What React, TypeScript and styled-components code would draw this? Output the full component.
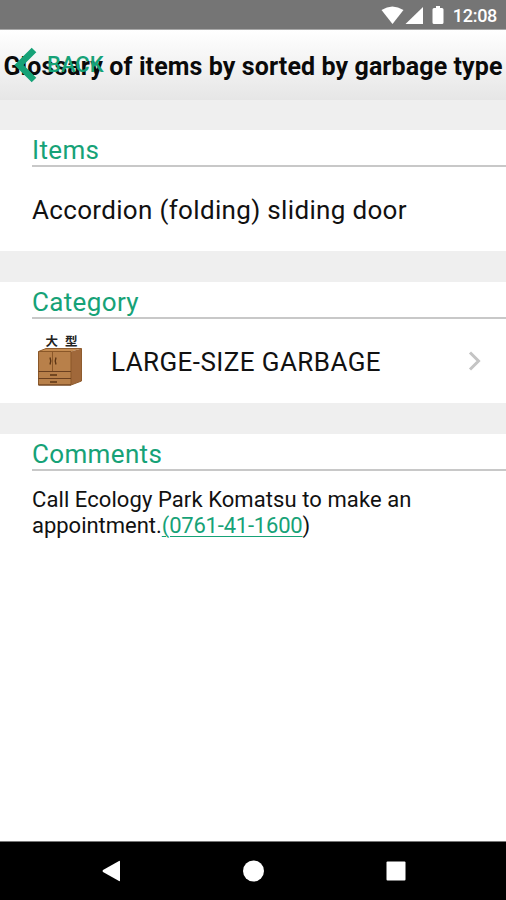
import React from "react";
import styled, { createGlobalStyle } from "styled-components";

const GREEN = "#16a277";

const GlobalStyle = createGlobalStyle`
  * { box-sizing: border-box; }
  body { margin: 0; background: #fff; font-family: Roboto, "Noto Sans", sans-serif; color: #111; }
`;

const Screen = styled.div`
  display: flex;
  flex-direction: column;
  width: 506px;
  height: 900px;
  overflow: hidden;
  background: #efefef;
`;

const StatusBar = styled.div`
  display: flex;
  justify-content: flex-end;
  align-items: center;
  flex: none;
  height: 30px;
  padding-right: 9px;
  background: #757575;
  border-bottom: 1px solid #a8a8a8;
  color: #fff;
`;

const StatusIcons = styled.svg`
  width: 64px;
  height: 22px;
  margin-right: 8px;
  fill: #fff;
`;

const Clock = styled.span`
  font-size: 18px;
  font-weight: 500;
  line-height: 30px;
  letter-spacing: -0.3px;
  padding-top: 3px;
`;

const Header = styled.header`
  position: relative;
  display: flex;
  flex: none;
  justify-content: center;
  height: 70px;
  background: linear-gradient(#ffffff, #e6e6e6);
`;

const Title = styled.h1`
  margin: 0;
  font-size: 25px;
  font-weight: 700;
  line-height: 73px;
  letter-spacing: 0.1px;
  white-space: nowrap;
  color: #0a0a0a;
`;

const BackButton = styled.button`
  position: absolute;
  left: 14px;
  top: 0;
  display: flex;
  align-items: center;
  gap: 9px;
  height: 70px;
  padding: 0;
  border: 0;
  background: none;
  color: ${GREEN};
  font: 500 22px/70px Roboto, sans-serif;
`;

const BackChevron = styled.svg`
  width: 24px;
  height: 36px;
`;

const Section = styled.section<{ $grow?: boolean }>`
  display: flex;
  flex-direction: column;
  flex: ${(p) => (p.$grow ? "1 1 0" : "0 0 121px")};
  margin-top: 30px;
  padding-left: 32px;
  background: #fff;

  & + & { margin-top: 31px; }
`;

const SectionTitle = styled.h2`
  flex: none;
  margin: 0;
  height: 37px;
  border-bottom: 2px solid #c8c8c8;
  color: ${GREEN};
  font-size: 26px;
  font-weight: 400;
  line-height: 41px;
  letter-spacing: 0.35px;
`;

const Row = styled.div`
  display: flex;
  align-items: center;
  flex: 1;
  padding-right: 24px;
`;

const Label = styled.span<{ $spacing: number }>`
  flex: 1;
  font-size: 26px;
  line-height: 32px;
  letter-spacing: ${(p) => p.$spacing}px;
  padding-top: 2px;
  white-space: nowrap;
`;

const CategoryIcon = styled.svg`
  width: 56px;
  height: 60px;
  margin-right: 23px;
`;

const Kanji = styled.text`
  font: 700 12.5px "Noto Sans CJK JP", sans-serif;
  fill: #222;
`;

const RowChevron = styled.svg`
  width: 14px;
  height: 22px;
`;

const Comment = styled.p`
  margin: 16px 0 0;
  font-size: 22px;
  line-height: 26px;
  letter-spacing: 0.08px;
  white-space: nowrap;
`;

const CommentLine = styled.span<{ $spacing: number }>`
  display: block;
  letter-spacing: ${(p) => p.$spacing}px;
`;

const Phone = styled.a`
  color: ${GREEN};
  letter-spacing: -0.2px;
  text-decoration: underline;
  text-decoration-thickness: 1px;
  text-underline-offset: 3px;
`;

const NavBar = styled.nav`
  flex: none;
  display: flex;
  align-items: center;
  justify-content: space-between;
  height: 59px;
  padding: 0 99px 0 101px;
  background: #000;
  border-top: 1px solid #777;
`;

const NavIcon = styled.svg`
  width: 22px;
  height: 22px;
  fill: #fff;
`;

const Cabinet = () => (
  <CategoryIcon viewBox="0 -2 56 60">
    <Kanji x="13.500" y="13">大</Kanji>
    <Kanji x="33" y="13">型</Kanji>
    <path d="M6.500 18.500 L14 15.500 H49.500 L39 18.500 Z" fill="#c68d52" />
    <path d="M39 18.500 L49.500 15.500 V48 L39 52 Z" fill="#a0683a" />
    <path d="M6.500 18.500 H39 V52 H6.500 Z" fill="#b8804a" />
    <path d="M6.500 18.500 H39 V52 H6.500 Z M20.500 18.500 V38" fill="none" stroke="#8a5728" strokeWidth="1" />
    <path d="M6.500 38.500 H39 M6.500 45.500 H39 M6.500 52 H39" fill="none" stroke="#6b4020" strokeWidth="1.200" />
    <path d="M6.500 18.500 L14 15.500 H49.500 V48 L39 52" fill="none" stroke="#8f5c2e" strokeWidth="1" />
    <path d="M18 24.500 Q19.500 28 18 31.500 M24 24.500 Q22.500 28 24 31.500 M18 42 H25 M18 49 H25" fill="none" stroke="#5b3414" strokeWidth="1.400" />
  </CategoryIcon>
);

export default function App() {
  return (
    <Screen>
      <GlobalStyle />
      <StatusBar>
        <StatusIcons viewBox="0 0 64 22">
          <path d="M0.500 6 Q11.300 -1 22.500 6 L11.500 20 Z" />
          <path d="M42 3 V20 H24.500 Z" />
          <path d="M55 2 h4 v2 h2 q1.500 0 1.500 1.500 v13 q0 1.500 -1.500 1.500 h-8 q-1.500 0 -1.500 -1.500 v-13 q0 -1.500 1.500 -1.500 h2 Z" />
        </StatusIcons>
        <Clock>12:08</Clock>
      </StatusBar>
      <Header>
        <Title>Glossary of items by sorted by garbage type</Title>
        <BackButton>
          <BackChevron viewBox="0 0 24 36">
            <path d="M20 3 L5 18 L20 33" fill="none" stroke={GREEN} strokeWidth="6.500" />
          </BackChevron>
          BACK
        </BackButton>
      </Header>
      <Section>
        <SectionTitle>Items</SectionTitle>
        <Row>
          <Label $spacing={0.33}>Accordion (folding) sliding door</Label>
        </Row>
      </Section>
      <Section>
        <SectionTitle>Category</SectionTitle>
        <Row>
          <Cabinet />
          <Label $spacing={0.42}>LARGE-SIZE GARBAGE</Label>
          <RowChevron viewBox="0 0 14 22">
            <path d="M2 2.500 L10.500 11 L2 19.500" fill="none" stroke="#c4c4c4" strokeWidth="3" />
          </RowChevron>
        </Row>
      </Section>
      <Section $grow>
        <SectionTitle>Comments</SectionTitle>
        <Comment>
          <CommentLine $spacing={0.08}>Call Ecology Park Komatsu to make an</CommentLine>
          <CommentLine $spacing={-0.02}>
            appointment.<Phone href="tel:0761-41-1600">(0761-41-1600</Phone>)
          </CommentLine>
        </Comment>
      </Section>
      <NavBar>
        <NavIcon viewBox="0 0 22 22">
          <path d="M19 1.500 V20.500 Q19 21.500 18 21 L2 12 Q1 11 2 10 L18 1 Q19 0.500 19 1.500 Z" />
        </NavIcon>
        <NavIcon viewBox="0 0 22 22">
          <circle cx="10.500" cy="11" r="10.500" />
        </NavIcon>
        <NavIcon viewBox="0 0 22 22">
          <rect x="1.500" y="1.500" width="19" height="19" rx="1" />
        </NavIcon>
      </NavBar>
    </Screen>
  );
}
